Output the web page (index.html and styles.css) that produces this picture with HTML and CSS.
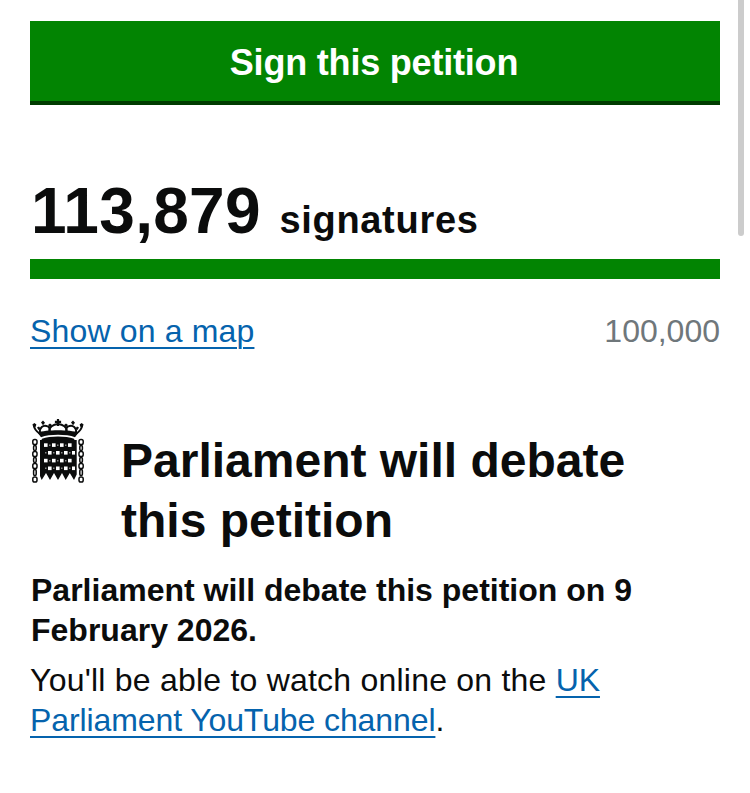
FILE: index.html
```html
<!DOCTYPE html>
<html lang="en">
<head>
<meta charset="utf-8">
<title>Petition</title>
<link rel="stylesheet" href="styles.css">
</head>
<body>
<div class="scroll-thumb"></div>
<main class="page">
  <a class="sign-button" href="#">Sign this petition</a>
  <div class="signature-count"><span class="count">113,879</span> <span class="count-label">signatures</span></div>
  <div class="progress"></div>
  <div class="meta-row">
    <a class="link map-link" href="#">Show on a map</a>
    <span class="target">100,000</span>
  </div>
  <section class="debate">
    <div class="debate-head">
      <svg class="portcullis" viewBox="0 0 52 64" aria-hidden="true">
        <g fill="none" stroke="#0b0c0c" stroke-width="1.900" stroke-linecap="round">
          <path d="M8 15C4 12 2 9 2 6.500"/>
          <path d="M8 14C7 9 11 5 16 7.500c1.500 1 2 3 1.500 5"/>
          <path d="M17.500 12C17 8 21 5.500 26 5c5 .5 9 3 8.500 7"/>
          <path d="M44 14c1-5-3-9-8-6.500-1.500 1-2 3-1.500 5"/>
          <path d="M44 15c4-3 6-6 6-8.500"/>
        </g>
        <g fill="#0b0c0c">
          <path d="M24.900 0h2.200v1.800h2v2.200h-2v3h-2.200V4h-2V1.800h2z"/>
          <path d="M.4 5.500l2-1.500 2 1.500-1 2.800H1.400zM47.600 5.500l2-1.500 2 1.500-1 2.800h-2zM9 3.500l2-2 2 2.200-2 2.500zM39 3.500l2-2 2 2.200-2 2.500z"/>
          <path d="M16 6l2-1.500L20 6l-2 2.500zM32 6l2-1.500L36 6l-2 2.500zM5 8.500l2-1 1.500 2-2 1.500zM47 8.500l-2-1-1.500 2 2 1.500z"/>
          <path d="M5.500 13.500C14 10.500 38 10.500 46.500 13.500L43 18.200C34 15 18 15 9 18.200z"/>
          <path d="M10 19.800C18 16.800 34 16.800 42 19.800l.5 1.200h-33z"/>
          <path d="M8 21h36.700v34.500L42 61l-4.200-7-4.100 7-3.700-7L26 61l-4-7-4 7-4-7-4.300 7L8 57z"/>
        </g>
        <g fill="#fff">
          <rect x="12" y="24.300" width="3.600" height="3.600"/><rect x="20" y="24.300" width="3.600" height="3.600"/><rect x="28" y="24.300" width="3.600" height="3.600"/><rect x="36" y="24.300" width="3.600" height="3.600"/>
          <rect x="16" y="32" width="3.600" height="3.600"/><rect x="24" y="32" width="3.600" height="3.600"/><rect x="32" y="32" width="3.600" height="3.600"/><rect x="40" y="32" width="3" height="3.600"/>
          <rect x="12" y="39.800" width="3.600" height="3.600"/><rect x="20" y="39.800" width="3.600" height="3.600"/><rect x="28" y="39.800" width="3.600" height="3.600"/><rect x="36" y="39.800" width="3.600" height="3.600"/>
          <rect x="16" y="47.500" width="3.600" height="3.600"/><rect x="24" y="47.500" width="3.600" height="3.600"/><rect x="32" y="47.500" width="3.600" height="3.600"/><rect x="40" y="47.500" width="3" height="3.600"/>
        </g>
        <g fill="#8a8a8a">
          <rect x="17" y="25.500" width="1.500" height="1.500"/><rect x="25" y="25.500" width="1.500" height="1.500"/><rect x="33" y="25.500" width="1.500" height="1.500"/>
          <rect x="13" y="33" width="1.500" height="1.500"/><rect x="21" y="33" width="1.500" height="1.500"/><rect x="29" y="33" width="1.500" height="1.500"/><rect x="37" y="33" width="1.500" height="1.500"/>
          <rect x="17" y="41" width="1.500" height="1.500"/><rect x="25" y="41" width="1.500" height="1.500"/><rect x="33" y="41" width="1.500" height="1.500"/>
          <rect x="13" y="48.500" width="1.500" height="1.500"/><rect x="21" y="48.500" width="1.500" height="1.500"/><rect x="29" y="48.500" width="1.500" height="1.500"/><rect x="37" y="48.500" width="1.500" height="1.500"/>
        </g>
        <g fill="none" stroke="#0b0c0c" stroke-width="1.500">
          <rect x=".8" y="20.500" width="4.200" height="5" rx="1.800"/><rect x="1.600" y="26.500" width="2.600" height="5" rx="1.200"/><rect x=".8" y="32.500" width="4.200" height="5" rx="1.800"/><rect x="1.600" y="38.500" width="2.600" height="5" rx="1.200"/><rect x=".8" y="44.500" width="4.200" height="5" rx="1.800"/><rect x="1.600" y="50.500" width="2.600" height="6" rx="1.200"/><rect x=".8" y="58" width="4.200" height="5" rx="1.800"/>
          <rect x="47" y="20.500" width="4.200" height="5" rx="1.800"/><rect x="47.800" y="26.500" width="2.600" height="5" rx="1.200"/><rect x="47" y="32.500" width="4.200" height="5" rx="1.800"/><rect x="47.800" y="38.500" width="2.600" height="5" rx="1.200"/><rect x="47" y="44.500" width="4.200" height="5" rx="1.800"/><rect x="47.800" y="50.500" width="2.600" height="6" rx="1.200"/><rect x="47" y="58" width="4.200" height="5" rx="1.800"/>
        </g>
      </svg>
      <h1 class="debate-title">Parliament will debate this petition</h1>
    </div>
    <p class="debate-date">Parliament will debate this petition on 9 February 2026.</p>
    <p class="debate-note">You'll be able to watch online on the <a class="link note-link" href="#">UK Parliament YouTube channel</a>.</p>
  </section>
</main>
</body>
</html>
```

FILE: styles.css
```css
* { box-sizing: border-box; }
html, body { margin: 0; padding: 0; background: #fff; overflow: hidden; }
body {
  font-family: "Liberation Sans", Arial, sans-serif;
  color: #0b0c0c;
  height: 793px;
}
.scroll-thumb {
  position: absolute;
  top: 0;
  left: 738px;
  width: 6px;
  height: 236px;
  background: #cccccc;
  border-radius: 0 0 3px 3px;
}
.page {
  width: 750px;
  padding: 21px 30px 0;
}
.sign-button {
  display: block;
  height: 84px;
  padding-right: 2px;
  background: #028402;
  border-bottom: 4px solid #003c00;
  color: #fff;
  font-size: 36px;
  font-weight: 700;
  line-height: 84px;
  letter-spacing: -0.2px;
  text-align: center;
  text-decoration: none;
}
.signature-count {
  margin-top: 71px;
  height: 83px;
  line-height: 70px;
  font-weight: 700;
  white-space: nowrap;
  padding-left: 1px;
}
.count { font-size: 64px; letter-spacing: 0.3px; }
.count-label { font-size: 38px; margin-left: 14px; letter-spacing: 0.7px; }
.progress { height: 20px; background: #028402; }
.meta-row {
  display: flex;
  justify-content: space-between;
  margin-top: 32px;
  font-size: 32px;
  line-height: 40px;
}
.link { color: #0563ad; text-decoration: underline; text-underline-offset: 5px; text-decoration-thickness: 2px; }
.map-link { letter-spacing: 0.16px; }
.note-link { letter-spacing: -0.1px; }
.target { color: #6f777b; }
.debate { margin-top: 68px; }
.debate-head { display: flex; align-items: flex-start; }
.portcullis { width: 52px; height: 64px; flex: none; margin-left: 2px; }
.debate-title {
  margin: 12px 0 0 37px;
  font-size: 48px;
  line-height: 60px;
  font-weight: 700;
  width: 560px;
}
.debate-date {
  margin: 19px 0 0;
  font-size: 32px;
  font-weight: 700;
  line-height: 40px;
  padding-left: 1px;
}
.debate-note {
  margin: 10px 0 0;
  font-size: 32px;
  line-height: 40px;
  letter-spacing: 0.22px;
}
```
